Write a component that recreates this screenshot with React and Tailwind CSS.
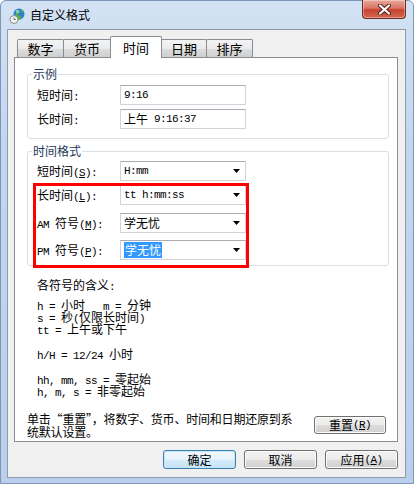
import React from "react";

const CJK = "font-['Noto_Sans_CJK_SC',sans-serif]";

// ascii runs in a narrow mono, chinese runs in the CJK face
const Mix = ({ text }) => {
    const parts = text.match(/[\x00-\x7f]+|[^\x00-\x7f]+/g) || [];
    return parts.map((p, i) =>
        /^[\x00-\x7f]/.test(p) ? (
            <span key={i} className="font-['Liberation_Mono',monospace] text-[11px] tracking-[-0.6px]">{p}</span>
        ) : (
            <span key={i} className="font-['Noto_Sans_CJK_SC',sans-serif] text-[12px]">{p}</span>
        )
    );
};

const Label = ({ pre, mn }) => (
    <span className="whitespace-pre">
        <Mix text={pre} />
        <span className="font-['Liberation_Mono',monospace] text-[11px] tracking-[-0.6px]">
            (<span className="underline">{mn}</span>):
        </span>
    </span>
);

const Row = ({ label, children }) => (
    <div className="flex items-center h-[20px]">
        <div className="w-[83px] leading-[14px]">{label}</div>
        {children}
    </div>
);

const TextBox = ({ children }) => (
    <div className="w-[126px] h-[20px] flex items-center pl-[3px] bg-white border border-[#d0d4da] border-t-[#abadb3] whitespace-pre leading-[14px]">
        {children}
    </div>
);

const Arrow = () => (
    <svg width="7" height="4" viewBox="0 0 7 4" className="ml-auto mr-[5px]">
        <path d="M0 0h7L3.5 4z" fill="#000" />
    </svg>
);

const Combo = ({ children }) => (
    <div className="w-[126px] h-[20px] flex items-center pl-[3px] bg-white border border-[#d0d4da] border-t-[#abadb3] whitespace-pre leading-[14px]">
        {children}
        <Arrow />
    </div>
);

const Group = ({ title, className, children }) => (
    <div className={"relative border border-[#d5dfe5] rounded-[3px] " + className}>
        <span className="absolute -top-[8px] left-[4px] px-[1px] bg-white text-[12px] leading-[14px] font-['Noto_Sans_CJK_SC',sans-serif] text-[#1e395b]">
            {title}
        </span>
        {children}
    </div>
);

const Tab = ({ label, w, active }) =>
    active ? (
        <div className={"h-[22px] -ml-px z-10 flex items-start justify-center pt-[3px] bg-white border border-b-0 border-[#898c95] rounded-t-[2px] text-[13px] leading-[16px] " + w}>
            {label}
        </div>
    ) : (
        <div className={"h-[18px] mb-[1px] -ml-px flex items-center justify-center bg-[linear-gradient(180deg,#f3f3f3_0%,#ebebeb_50%,#dddddd_51%,#d0d0d0_100%)] border border-b-0 border-[#898c95] rounded-t-[2px] text-[13px] leading-[16px] " + w}>
            {label}
        </div>
    );

const Btn = ({ children, primary }) => (
    <button
        className={
            primary
                ? "w-[73px] h-[19px] rounded-[3px] border border-[#3c7fb1] bg-[linear-gradient(180deg,#f2f9fd_0%,#e6f3fb_50%,#d4ebf8_51%,#c6e3f5_100%)] shadow-[inset_0_0_0_1px_#c4e5f6] text-[12px] leading-[14px] flex items-center justify-center"
                : "w-[73px] h-[19px] rounded-[3px] border border-[#707070] bg-[linear-gradient(180deg,#f2f2f2_0%,#ebebeb_50%,#dddddd_51%,#cfcfcf_100%)] shadow-[inset_0_0_0_1px_#fcfcfc] text-[12px] leading-[14px] flex items-center justify-center"
        }
    >
        {children}
    </button>
);

const TitleIcon = () => (
    <svg width="16" height="16" viewBox="0 0 16 16">
        <circle cx="10" cy="6" r="5.5" fill="#2f7fd0" />
        <path d="M7 3c2-1 3 1 2 2s-2 2-1 3 2 0 3 1-1 2-2 2M12 2c1 1 1 2 2 2" stroke="#58b33a" strokeWidth="2" fill="none" />
        <circle cx="8.5" cy="3.5" r="1.8" fill="#9fd6ff" opacity="0.7" />
        <circle cx="5" cy="11.5" r="4" fill="#f4f4f4" stroke="#8a8a8a" strokeWidth="1" />
        <path d="M5 9.5v2h1.8" stroke="#555" strokeWidth="0.9" fill="none" />
    </svg>
);

const CloseBtn = () => (
    <div className="self-start -mt-px w-[44px] h-[19px] rounded-b-[4px] border border-t-0 border-[#6e2a22] bg-[linear-gradient(180deg,#e8a89a_0%,#d97565_45%,#c7402d_55%,#d36a52_100%)] shadow-[inset_0_0_0_1px_rgba(255,255,255,0.35)] flex items-center justify-center">
        <svg width="13" height="11" viewBox="0 0 13 11">
            <path d="M2 1.5l9 8M11 1.5l-9 8" stroke="#5a2019" strokeWidth="4.2" strokeLinecap="round" />
            <path d="M2 1.5l9 8M11 1.5l-9 8" stroke="#fff" strokeWidth="2.2" strokeLinecap="round" />
        </svg>
    </div>
);

const infoLines = [
    ["h = 小时   m = 分钟", "mt-[8px]"],
    ["s = 秒(仅限长时间)", ""],
    ["tt = 上午或下午", ""],
    ["h/H = 12/24 小时", "mt-[13px]"],
    ["hh, mm, ss = 零起始", "mt-[13px]"],
    ["h, m, s = 非零起始", ""],
];

export default function App() {
    return (
        <div className={"w-[414px] h-[484px] flex flex-col pl-[6px] pr-[7px] pb-[5px] border border-[#7f97b6] rounded-t-[6px] bg-[linear-gradient(180deg,#d3e2f4_0%,#c2d6ef_30%,#b9cfeb_100%)] text-black " + CJK}>
            {/* title bar */}
            <div className="h-[28px] flex items-center">
                <div className="ml-[2px] mt-[1px]">
                    <TitleIcon />
                </div>
                <span className="ml-[5px] text-[12px] leading-[14px]">自定义格式</span>
                <div className="ml-auto self-start">
                    <CloseBtn />
                </div>
            </div>

            {/* client area */}
            <div className="flex-1 flex flex-col bg-[#f0f0f0] border border-[#8e9bab] pt-[6px]">
                <div className="flex items-end h-[22px] ml-[9px] relative z-10">
                    <Tab label="数字" w="w-[47px] ml-0" />
                    <Tab label="货币" w="w-[48px]" />
                    <Tab label="时间" w="w-[52px]" active />
                    <Tab label="日期" w="w-[46px]" />
                    <Tab label="排序" w="w-[47px]" />
                </div>

                <div className="-mt-px ml-[6px] mr-[7px] h-[385px] flex flex-col bg-white border border-[#898c95]">
                    <Group title="示例" className="mt-[16px] ml-[12px] mr-[8px] pt-[10px] pb-[9px] pl-[9px] flex flex-col gap-[4px]">
                        <Row label={<Mix text="短时间:" />}>
                            <TextBox>
                                <Mix text="9:16" />
                            </TextBox>
                        </Row>
                        <Row label={<Mix text="长时间:" />}>
                            <TextBox>
                                <Mix text="上午 9:16:37" />
                            </TextBox>
                        </Row>
                    </Group>

                    <Group title="时间格式" className="mt-[12px] ml-[12px] mr-[8px] pt-[9px] pb-[5px] pl-[9px] flex flex-col">
                        <Row label={<Label pre="短时间" mn="S" />}>
                            <Combo>
                                <Mix text="H:mm" />
                            </Combo>
                        </Row>
                        <div className="mt-[4px]">
                            <Row label={<Label pre="长时间" mn="L" />}>
                                <Combo>
                                    <Mix text="tt h:mm:ss" />
                                </Combo>
                            </Row>
                        </div>
                        <div className="mt-[8px]">
                            <Row label={<Label pre="AM 符号" mn="M" />}>
                                <Combo>
                                    <span className="text-[12px] leading-[14px]">学无忧</span>
                                </Combo>
                            </Row>
                        </div>
                        <div className="mt-[7px]">
                            <Row label={<Label pre="PM 符号" mn="P" />}>
                                <Combo>
                                    <span className="bg-[#3399ff] text-white text-[12px] leading-[16px] px-[1px]">学无忧</span>
                                </Combo>
                            </Row>
                        </div>
                        {/* red annotation box */}
                        <div className="absolute left-[5px] top-[31px] w-[216px] h-[85px] border-[3px] border-[#ff0000] pointer-events-none" />
                    </Group>

                    <div className="mt-[11px] ml-[22px] flex flex-col">
                        <div className="h-[12px] leading-[12px] whitespace-pre">
                            <Mix text="各符号的含义:" />
                        </div>
                        {infoLines.map(([t, m]) => (
                            <div key={t} className={"h-[12px] leading-[12px] whitespace-pre " + m}>
                                <Mix text={t} />
                            </div>
                        ))}
                    </div>

                    <div className="mt-auto mb-[3px] ml-[12px] mr-[11px] flex items-center justify-between">
                        <div className="text-[12px] leading-[13px] tracking-[-0.2px]">
                            单击“重置”，将数字、货币、时间和日期还原到系
                            <br />
                            统默认设置。
                        </div>
                        <div className="[&>button]:w-[72px] [&>button]:h-[18px]">
                            <Btn>
                                重置<span className="font-['Liberation_Mono',monospace] text-[11px] tracking-[-0.6px]">(<span className="underline">R</span>)</span>
                            </Btn>
                        </div>
                    </div>
                </div>

                <div className="mt-[8px] mr-[7px] flex justify-end gap-[8px]">
                    <Btn primary>确定</Btn>
                    <Btn>取消</Btn>
                    <Btn>
                        应用<span className="font-['Liberation_Mono',monospace] text-[11px] tracking-[-0.6px]">(<span className="underline">A</span>)</span>
                    </Btn>
                </div>
            </div>
        </div>
    );
}
